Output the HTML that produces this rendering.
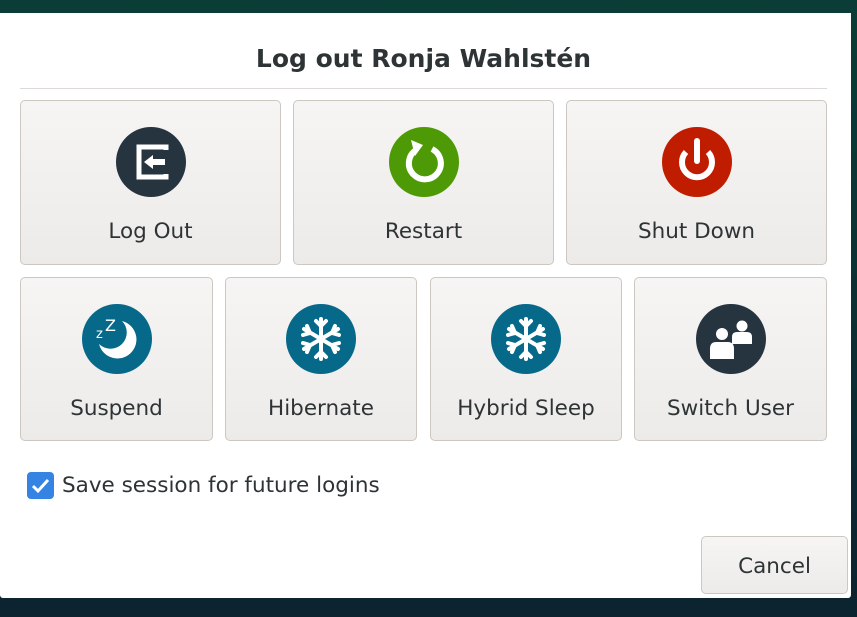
<!DOCTYPE html>
<html><head><style>
body{margin:0;width:857px;height:617px;overflow:hidden;background:linear-gradient(#0b3d37,#0c2330);font-family:"Liberation Sans","DejaVu Sans",sans-serif;position:relative}
.dlg{position:absolute;left:0;top:13px;width:851px;height:585px;background:#fff;border-radius:0 0 3px 3px}
.title{position:absolute;left:0;width:847px;top:44px;text-align:center;font-weight:bold;color:#2e3436;font-family:"DejaVu Sans",sans-serif;font-size:25px}
.sep{position:absolute;left:20px;width:807px;top:88px;height:1px;background:#ddd9d6}
.b{position:absolute;background:linear-gradient(#f6f5f4,#edebe9);border:1px solid #cdc7c2;border-radius:5px;box-sizing:border-box}
.b svg{position:absolute;left:50%;top:26px;margin-left:-35px}
.b span{position:absolute;left:0;right:0;top:118px;text-align:center;font-family:"DejaVu Sans",sans-serif;font-size:21.5px;color:#2e3436}
.cb{position:absolute;left:27px;top:472px;width:27px;height:27px;background:#3584e4;border-radius:4px}
.cbl{position:absolute;left:62px;top:473px;font-family:"DejaVu Sans",sans-serif;font-size:21.5px;color:#2e3436}
</style></head><body>
<div class="dlg"></div>
<div class="title">Log out Ronja Wahlstén</div>
<div class="sep"></div>

<div class="b" style="left:20px;top:100px;width:261px;height:165px">
<svg width="70" height="70" viewBox="0 0 70 70"><circle cx="35" cy="35" r="35" fill="#263440"/><path d="M50 23V20H23V50H50V47" fill="none" stroke="#fff" stroke-width="5"/><path d="M28 35L37 28V32H49V38H37V42Z" fill="#fff"/></svg><span>Log Out</span></div>
<div class="b" style="left:293px;top:100px;width:261px;height:165px">
<svg width="70" height="70" viewBox="0 0 70 70"><circle cx="35" cy="35" r="35" fill="#4e9a06"/><path d="M27 23A16 16 0 1 0 43 22" fill="none" stroke="#fff" stroke-width="6"/><path d="M22 13L34 18L26 29Z" fill="#fff"/></svg><span>Restart</span></div>
<div class="b" style="left:566px;top:100px;width:261px;height:165px">
<svg width="70" height="70" viewBox="0 0 70 70"><circle cx="35" cy="35" r="35" fill="#c01c00"/><path d="M24 25A15 15 0 1 0 46 25" fill="none" stroke="#fff" stroke-width="6"/><path d="M35 14V34" stroke="#fff" stroke-width="6" stroke-linecap="round"/></svg><span>Shut Down</span></div>

<div class="b" style="left:20px;top:277px;width:193px;height:164px">
<svg width="70" height="70" viewBox="0 0 70 70"><circle cx="35" cy="35" r="35" fill="#07698a"/><path d="M40 17A19 19 0 1 1 17 40A15 15 0 0 0 40 17Z" fill="#fff"/><text x="14" y="34" font-size="13" fill="#fff" font-family="DejaVu Sans">z</text><text x="23" y="27" font-size="16" fill="#fff" font-family="DejaVu Sans">Z</text></svg><span>Suspend</span></div>
<div class="b" style="left:225px;top:277px;width:192px;height:164px">
<svg width="70" height="70" viewBox="0 0 70 70"><circle cx="35" cy="35" r="35" fill="#07698a"/><g stroke="#fff" stroke-width="4" stroke-linecap="round" fill="none"><path d="M35 15V55M18 25L52 45M18 45L52 25"/><path d="M30 17L35 22L40 17M30 53L35 48L40 53M17 31L24 29L21 22M53 31L46 29L49 22M17 39L24 41L21 48M53 39L46 41L49 48"/></g></svg><span>Hibernate</span></div>
<div class="b" style="left:430px;top:277px;width:192px;height:164px">
<svg width="70" height="70" viewBox="0 0 70 70"><circle cx="35" cy="35" r="35" fill="#07698a"/><g stroke="#fff" stroke-width="4" stroke-linecap="round" fill="none"><path d="M35 15V55M18 25L52 45M18 45L52 25"/><path d="M30 17L35 22L40 17M30 53L35 48L40 53M17 31L24 29L21 22M53 31L46 29L49 22M17 39L24 41L21 48M53 39L46 41L49 48"/></g></svg><span>Hybrid Sleep</span></div>
<div class="b" style="left:634px;top:277px;width:193px;height:164px">
<svg width="70" height="70" viewBox="0 0 70 70"><circle cx="35" cy="35" r="35" fill="#263440"/><g fill="#fff"><circle cx="26" cy="30" r="6"/><path d="M14 55V45Q14 38 20 38H32Q38 38 38 45V55Z"/><circle cx="46" cy="22" r="5.5"/><path d="M36 40V33Q36 28 41 28H51Q56 28 56 33V40Z"/></g></svg><span>Switch User</span></div>

<div class="cb"><svg width="27" height="27"><path d="M6 14L11 19L21 8" fill="none" stroke="#fff" stroke-width="3"/></svg></div>
<div class="cbl">Save session for future logins</div>
<div class="b" style="left:701px;top:536px;width:147px;height:58px"><span style="top:17px">Cancel</span></div>
</body></html>
